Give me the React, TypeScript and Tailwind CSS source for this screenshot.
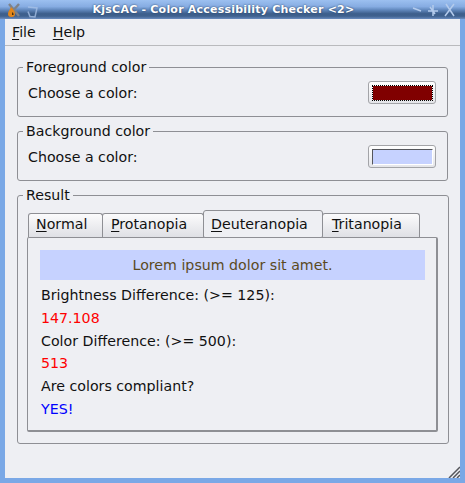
import type { ReactNode } from "react";

const TABS = [
  { key: "N", rest: "ormal", box: "w-[75px] pl-[7px]", active: false },
  { key: "P", rest: "rotanopia", box: "w-[102px] pl-[8px]", active: false },
  { key: "D", rest: "euteranopia", box: "w-[120px] pl-[7px]", active: true },
  { key: "T", rest: "ritanopia", box: "w-[98px] pl-[9px]", active: false },
];

function TitleBar() {
  return (
    <div className="relative flex h-[19px] items-center justify-center bg-[linear-gradient(to_bottom,#9cc0f0_0%,#86ace2_35%,#6188bd_52%,#3d5f8c_72%,#3f618e_85%,#6a8cbf_100%)] pr-[18px]">
      <svg className="absolute left-[6px] top-[2px]" width="34" height="16" viewBox="0 0 34 16" fill="none">
        <path d="M3 2l10 12M13 2L5 11" stroke="#7f8288" strokeWidth="2.4" />
        <path d="M2 12c0-3 2-4 3-7 2 2 4 4 4 7 0 2-1 3-3.500 3S2 14 2 12z" fill="#e2861a" />
        <path d="M6 13c0-1 0-2 .5-3 1 1 1 2 1 3z" fill="#3a2a10" />
        <path d="M22 5l9 1-2 9-5-.5-2-5" stroke="#a9c3e8" strokeWidth="1.5" opacity="0.75" />
      </svg>
      <span className="font-['DejaVu_Sans',sans-serif] text-[11px] font-bold tracking-[0.22px] text-white [text-shadow:0_0_2px_#1d3557]">
        {"KjsCAC - Color Accessibility Checker <2>"}
      </span>
      <svg className="absolute left-[411px] top-[3px]" width="50" height="14" viewBox="0 0 50 14" fill="none" stroke="#b4cbec" strokeWidth="1.5">
        <path d="M2 5l8 3" />
        <path d="M17 8h10M22 2v11M19 4l5 7" />
        <path d="M34 13l9-12M35 1l8 12" />
      </svg>
    </div>
  );
}

function MenuItem({ letter, rest }: { letter: string; rest: string }) {
  return (
    <span>
      <span className="underline underline-offset-2">{letter}</span>
      {rest}
    </span>
  );
}

function GroupBox({ title, className, children }: { title: string; className: string; children: ReactNode }) {
  return (
    <fieldset className={`rounded-[3px] border border-[#8e8f94] ${className}`}>
      <legend className="ml-[5px] px-[3px] leading-[16px]">{title}</legend>
      {children}
    </fieldset>
  );
}

function ColorRow({ swatch }: { swatch: ReactNode }) {
  return (
    <div className="flex h-[35px] items-center justify-between pl-[10px] pr-[11px]">
      <span>Choose a color:</span>
      <div className="flex h-[23px] w-[68px] items-center rounded-[3px] border border-[#a3a4a8] bg-[linear-gradient(to_bottom,#ffffff,#e4e5e9)] pl-[3px]">
        {swatch}
      </div>
    </div>
  );
}

function Tab({ tab }: { tab: (typeof TABS)[number] }) {
  if (tab.active) {
    return (
      <div className={`relative z-10 -mb-px -ml-px h-[28px] ${tab.box} rounded-t-[3px] rounded-b-[2px] border border-[#8e8f94] bg-[#eeeff3] pt-[5px]`}>
        <span className="underline underline-offset-2">{tab.key}</span>
        {tab.rest}
      </div>
    );
  }
  return (
    <div className={`-ml-px h-[24px] ${tab.box} rounded-t-[3px] border border-b-0 border-[#8e8f94] bg-[linear-gradient(to_bottom,#fbfbfc,#dfe0e5)] pt-[2px]`}>
      <span className="underline underline-offset-2">{tab.key}</span>
      {tab.rest}
    </div>
  );
}

export default function App() {
  return (
    <div className="flex h-[483px] w-[465px] flex-col overflow-hidden bg-[#7aa8e6] font-['DejaVu_Sans',sans-serif] text-[14.2px] leading-[16px] text-[#111]">
      <TitleBar />
      <div className="relative mx-[5px] mb-[5px] flex flex-1 flex-col bg-[#eeeff3]">
        <div className="flex h-[27px] items-center gap-[17px] border-b border-b-[#b9babd] pb-[1px] pl-[7px]">
          <MenuItem letter="F" rest="ile" />
          <MenuItem letter="H" rest="elp" />
        </div>
        <div className="flex flex-1 flex-col px-[12px] pt-[13px]">
          <GroupBox title="Foreground color" className="h-[58px]">
            <ColorRow
              swatch={<div className="h-[16px] w-[61px] border border-dotted border-black bg-[#800000] bg-clip-padding" />}
            />
          </GroupBox>
          <GroupBox title="Background color" className="mt-[6px] h-[58px]">
            <ColorRow
              swatch={<div className="h-[16px] w-[61px] border border-b-white border-l-[#55565b] border-r-white border-t-[#55565b] bg-[#c6d2ff]" />}
            />
          </GroupBox>
          <GroupBox title="Result" className="mt-[6px] h-[257px]">
            <div className="pl-[9px] pr-[10px] pt-[7px]">
              <div className="flex items-end pl-[2px]">
                {TABS.map((tab) => (
                  <Tab key={tab.key} tab={tab} />
                ))}
              </div>
              <div className="h-[195px] w-[411px] rounded-[2px] border border-b-2 border-r-2 border-[#8e8f94] pl-[12px] pr-[11px] pt-[12px]">
                <div className="flex h-[30px] items-center justify-center bg-[#c6d2ff] text-[#5b4a1e]">
                  Lorem ipsum dolor sit amet.
                </div>
                <div className="flex flex-col gap-[6.8px] pl-[1px] pt-[7px]">
                  <span>{"Brightness Difference: (>= 125):"}</span>
                  <span className="text-[#ff0000]">147.108</span>
                  <span>{"Color Difference: (>= 500):"}</span>
                  <span className="text-[#ff0000]">513</span>
                  <span>Are colors compliant?</span>
                  <span className="text-[#0000ff]">YES!</span>
                </div>
              </div>
            </div>
          </GroupBox>
        </div>
        <svg className="absolute bottom-0 right-0" width="12" height="12" viewBox="0 0 12 12" stroke="#55565b" strokeWidth="1.5">
          <path d="M1 12L12 1M5 12L12 5M9 12l3-3" />
        </svg>
      </div>
    </div>
  );
}
